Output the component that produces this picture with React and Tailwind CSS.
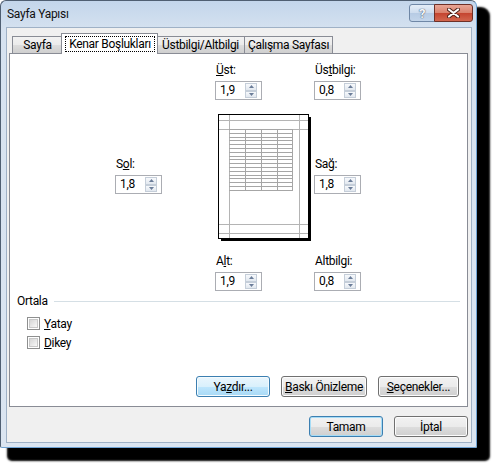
import React from 'react'

const BTN_NORMAL =
  'border-[#707070] bg-[linear-gradient(#f2f2f2,#ebebeb_50%,#dddddd_51%,#cfcfcf)] shadow-[inset_0_0_0_1px_#fcfcfc]'
const BTN_HOT =
  'border-[#3c7fb1] bg-[linear-gradient(#eaf6fd,#d9f0fc_50%,#bee6fd_51%,#a7d9f5)] shadow-[inset_0_0_0_1px_#f4fbfe]'
const BTN_DEFAULT =
  'border-[#3c7fb1] bg-[linear-gradient(#f2f2f2,#ebebeb_50%,#dddddd_51%,#cfcfcf)] shadow-[inset_0_0_0_1px_#a6dcf6]'

function Button({ kind = 'normal', width, children }) {
  const look = kind === 'hot' ? BTN_HOT : kind === 'default' ? BTN_DEFAULT : BTN_NORMAL
  return (
    <div className={`${width} h-[21px] flex items-center justify-center rounded-[3px] border leading-none ${look}`}>
      <span className="whitespace-nowrap">{children}</span>
    </div>
  )
}

function SpinHalf({ up }) {
  return (
    <div className="flex-1 flex items-center justify-center border border-[#c5ced9] bg-[linear-gradient(#f7f9fc,#e2e8ef)]">
      <svg width="5" height="3" viewBox="0 0 5 3">
        {up ? <polygon points="2.5,0 5,3 0,3" fill="#6b7d99" /> : <polygon points="0,0 5,0 2.5,3" fill="#6b7d99" />}
      </svg>
    </div>
  )
}

function SpinField({ label, value }) {
  return (
    <div className="w-[47px]">
      <div className="h-[14px] leading-[14px] pl-[1px] whitespace-nowrap">{label}</div>
      <div className="mt-[4px] h-[19px] flex border border-[#abadb3] bg-white">
        <span className="flex-1 pl-[4px] leading-[17px]">{value}</span>
        <div className="w-[12px] my-[1px] mr-[4px] flex flex-col">
          <SpinHalf up />
          <SpinHalf />
        </div>
      </div>
    </div>
  )
}

function PagePreview() {
  const rows = []
  for (let i = 0; i <= 16; i++) rows.push(Math.round(15 + i * 3.8) + 0.5)
  return (
    <svg width="93" height="127" viewBox="0 0 93 127" className="shrink-0">
      <rect x="91" y="3" width="2" height="124" fill="#000" />
      <rect x="3" y="125" width="90" height="2" fill="#000" />
      <rect x="0.5" y="0.5" width="90" height="124" fill="#fff" stroke="#000" />
      {/* margin guides */}
      <g stroke="#b4b4b4" strokeWidth="1">
        <line x1="1" y1="6.5" x2="90" y2="6.5" />
        <line x1="1" y1="15.5" x2="90" y2="15.5" />
        <line x1="1" y1="110.5" x2="90" y2="110.5" />
        <line x1="1" y1="119.5" x2="90" y2="119.5" />
        <line x1="11.5" y1="1" x2="11.5" y2="124" />
        <line x1="81.5" y1="1" x2="81.5" y2="124" />
      </g>
      {/* sheet grid */}
      <g stroke="#a6a6a6" strokeWidth="1">
        {rows.map((y) => (
          <line key={y} x1="11" y1={y} x2="75" y2={y} />
        ))}
        {[27.5, 43.5, 59.5, 74.5].map((x) => (
          <line key={x} x1={x} y1="15" x2={x} y2={rows[rows.length - 1]} />
        ))}
      </g>
    </svg>
  )
}

function CheckBox({ children }) {
  return (
    <div className="h-[19px] flex items-center gap-[4px]">
      <div className="w-[13px] h-[13px] border border-[#8e8f8f] bg-white p-[1px]">
        <div className="w-full h-full border border-[#c8c8c8] bg-[linear-gradient(135deg,#d6d6d6,#f8f8f8)]" />
      </div>
      <span className="leading-[16px]">{children}</span>
    </div>
  )
}

export default function App() {
  return (
    <div className="w-[492px] h-[464px] bg-white font-['Roboto',sans-serif] text-[12px] tracking-[-0.3px] text-black">
      <div className="w-[477px] h-[448px] flex flex-col rounded-t-[6px] rounded-b-[2px] border border-[#4f5f72] border-r-[#6fa3d4] border-b-[#6fa3d4] bg-[linear-gradient(#c3d6eb,#d6e2f0_30px,#dbe5f1)] shadow-[10px_10px_2px_3px_#000]">
        {/* title bar */}
        <div className="h-[26px] flex items-start">
          <span className="ml-[6px] mt-[5px] leading-[16px] text-[#111]">Sayfa Yapısı</span>
          <div className="ml-auto mt-[3px] mr-[3px] flex">
            <div className="w-[26px] h-[18px] flex items-center justify-center rounded-l-[3px] border border-[#6f87a6] bg-[linear-gradient(#e4edf7,#cddcee_50%,#b6cbe4_51%,#c3d5ea)]">
              <span className="font-bold text-[13px] leading-none text-[#f4f7fb] [text-shadow:0_0_1px_#44546a,0_0_1px_#44546a]">?</span>
            </div>
            <div className="w-[39px] h-[18px] -ml-px flex items-center justify-center rounded-r-[3px] border border-[#6e3027] bg-[linear-gradient(#e8a595,#d9806b_50%,#c4442f_51%,#d2664e)]">
              <svg width="13" height="10" viewBox="0 0 13 10">
                <path d="M2 1.5L11 8.5M11 1.5L2 8.5" stroke="#4a2018" strokeWidth="4" strokeLinecap="round" />
                <path d="M2 1.5L11 8.5M11 1.5L2 8.5" stroke="#fff" strokeWidth="2.2" strokeLinecap="round" />
              </svg>
            </div>
          </div>
        </div>

        {/* client area */}
        <div className="flex-1 ml-[5px] mr-[4px] mb-[4px] bg-[#f0f0f0] border border-[#9fb1c6] flex flex-col pl-[2px] pr-[3px] pt-[5px]">
          {/* tabs */}
          <div className="h-[20px] flex items-end pl-[3px]">
            <div className="w-[51px] h-[17px] flex items-center justify-center border border-b-0 border-[#898c95] bg-[linear-gradient(#f2f2f2,#ebebeb_50%,#dddddd_51%,#cfcfcf)]">
              Sayfa
            </div>
            <div className="relative z-10 -ml-[2px] -mb-px w-[97px] h-[21px] flex items-start justify-center pt-[2px] pl-[1px] border border-b-0 border-[#898c95] bg-white">
              <span className="border border-dotted border-black px-[3px] leading-[14px] whitespace-nowrap">
                Kenar Boşlukları
              </span>
            </div>
            <div className="-ml-[2px] w-[89px] h-[17px] flex items-center justify-center border border-b-0 border-[#898c95] bg-[linear-gradient(#f2f2f2,#ebebeb_50%,#dddddd_51%,#cfcfcf)] whitespace-nowrap">
              Üstbilgi/Altbilgi
            </div>
            <div className="-ml-px w-[89px] h-[17px] flex items-center justify-center border border-b-0 border-[#898c95] bg-[linear-gradient(#f2f2f2,#ebebeb_50%,#dddddd_51%,#cfcfcf)] whitespace-nowrap">
              Çalışma Sayfası
            </div>
          </div>

          {/* tab panel */}
          <div className="h-[354px] border border-[#898c95] bg-white flex flex-col pt-[9px]">
            <div className="grid grid-cols-[100px_99px_47px] pl-[105px]">
              <div />
              <SpinField label={<><u>Ü</u>st:</>} value="1,9" />
              <SpinField label={<>Üs<u>t</u>bilgi:</>} value="0,8" />

              <div className="mt-[14px] pt-[43px]">
                <SpinField label={<>S<u>o</u>l:</>} value="1,8" />
              </div>
              <div className="mt-[14px] flex justify-center">
                <PagePreview />
              </div>
              <div className="mt-[14px] pt-[43px]">
                <SpinField label={<>Sa<u>ğ</u>:</>} value="1,8" />
              </div>

              <div />
              <div className="mt-[13px]">
                <SpinField label={<>A<u>l</u>t:</>} value="1,9" />
              </div>
              <div className="mt-[13px]">
                <SpinField label={<>Altbil<u>g</u>i:</>} value="0,8" />
              </div>
            </div>

            {/* Ortala group */}
            <div className="mt-[2px] h-[16px] flex items-center pl-[7px] pr-[7px]">
              <span className="leading-[16px]">Ortala</span>
              <div className="flex-1 ml-[6px] h-px bg-[#d5dfe5]" />
            </div>
            <div className="mt-[5px] pl-[17px] flex flex-col">
              <CheckBox>
                <u>Y</u>atay
              </CheckBox>
              <CheckBox>
                <u>D</u>ikey
              </CheckBox>
            </div>

            <div className="mt-auto mb-[9px] pr-[8px] flex justify-end gap-[11px]">
              <Button kind="hot" width="w-[74px]">
                Ya<u>z</u>dır...
              </Button>
              <Button width="w-[86px]">
                <u>B</u>askı Önizleme
              </Button>
              <Button width="w-[81px]">
                <u>S</u>eçenekler...
              </Button>
            </div>
          </div>

          {/* dialog buttons */}
          <div className="mt-[9px] flex justify-end gap-[11px]">
            <Button kind="default" width="w-[74px]">
              Tamam
            </Button>
            <Button width="w-[74px]">İptal</Button>
          </div>
        </div>
      </div>
    </div>
  )
}
